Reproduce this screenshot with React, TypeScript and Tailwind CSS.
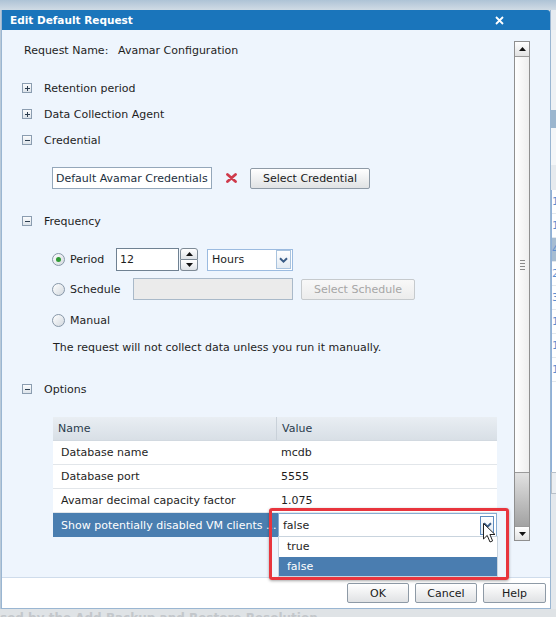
import React from "react";

function Toggle({ open }: { open?: boolean }) {
  return (
    <span className="flex h-[10px] w-[10px] shrink-0 items-center justify-center border border-[#8b9db0] bg-gradient-to-b from-[#fbfcfd] to-[#dce3ea]">
      <svg width="5" height="5" viewBox="0 0 5 5" shapeRendering="crispEdges">
        <rect x="0" y="2" width="5" height="1" fill="#2c3e50" />
        {!open && <rect x="2" y="0" width="1" height="5" fill="#2c3e50" />}
      </svg>
    </span>
  );
}

function Section({ label, open, className }: { label: string; open?: boolean; className: string }) {
  return (
    <div className={`flex h-[20px] items-center gap-[12px] pl-[20px] ${className}`}>
      <Toggle open={open} />
      <span>{label}</span>
    </div>
  );
}

function Radio({ checked }: { checked?: boolean }) {
  return (
    <span className="flex h-[13px] w-[13px] shrink-0 items-center justify-center rounded-full border border-[#8797a8] bg-gradient-to-br from-white to-[#d3d9df]">
      {checked && <span className="h-[5px] w-[5px] rounded-full bg-[#2f9a35]" />}
    </span>
  );
}

function Btn({ children, className, disabled }: { children: React.ReactNode; className: string; disabled?: boolean }) {
  return (
    <div
      className={`flex items-center justify-center rounded-[2px] border ${
        disabled
          ? "border-[#c6cacd] bg-gradient-to-b from-[#f8f8f8] to-[#ececec] text-[#a6a6a6]"
          : "border-[#8e9aa6] bg-gradient-to-b from-white to-[#e0e2e4] text-[#1a1a1a]"
      } ${className}`}
    >
      {children}
    </div>
  );
}

function Chevron() {
  return (
    <svg width="9" height="6" viewBox="0 0 9 6">
      <path d="M1 1.2 L4.5 4.6 L8 1.2" fill="none" stroke="#3a5c86" strokeWidth="2" />
    </svg>
  );
}

function Tri({ down }: { down?: boolean }) {
  return (
    <svg width="7" height="4" viewBox="0 0 7 4">
      <path d={down ? "M0 0 H7 L3.5 4 Z" : "M0 4 H7 L3.5 0 Z"} fill="#111" />
    </svg>
  );
}

const rows = [
  ["Database name", "mcdb"],
  ["Database port", "5555"],
  ["Avamar decimal capacity factor", "1.075"],
];

const bgNums = ["1", "1", "4", "2", "3", "1", "1", "1"];

export default function App() {
  return (
    <div className="relative flex h-[617px] w-[556px] flex-col overflow-hidden bg-[#dfe3e6] font-['DejaVu_Sans',sans-serif] text-[11px] leading-none text-[#1e1e1e]">
      <div className="h-[10px] shrink-0 bg-gradient-to-b from-[#aec3d6] to-[#d0dbe5]" />

      <div className="flex h-[599px] shrink-0">
        <div className="w-[1px] bg-[#b9c9d8]" />

        {/* dialog */}
        <div className="flex w-[550px] flex-col border-x border-b border-[#9ab6d2]">
          <div className="flex h-[20px] shrink-0 items-center justify-between rounded-tr-[3px] bg-[#1a75bb] pl-[8px] pr-[46px] text-[10.5px] font-bold text-white">
            <span>Edit Default Request</span>
            <svg width="9" height="9" viewBox="0 0 9 9">
              <path d="M1 1 L8 8 M8 1 L1 8" stroke="white" strokeWidth="1.8" />
            </svg>
          </div>

          <div className="flex h-[547px] shrink-0 bg-[#eef5fd]">
            <div className="flex w-[512px] flex-col">
              <div className="mt-[10px] flex h-[20px] items-center pl-[22px]">
                <span className="w-[94px]">Request Name:</span>
                <span>Avamar Configuration</span>
              </div>

              <Section label="Retention period" className="mt-[18px]" />
              <Section label="Data Collection Agent" className="mt-[6px]" />
              <Section label="Credential" open className="mt-[6px]" />

              <div className="mt-[17px] flex h-[22px] items-center pl-[50px]">
                <div className="flex h-[22px] w-[160px] items-center border border-[#94a7ba] bg-white pl-[3px] text-[#1b2f3e]">
                  Default Avamar Credentials
                </div>
                <svg className="ml-[14px]" width="11" height="10" viewBox="0 0 11 10">
                  <path d="M1.5 1.5 L9.5 8.5 M9.5 1.5 L1.5 8.5" stroke="#cf3a4b" strokeWidth="2.8" strokeLinecap="round" />
                </svg>
                <Btn className="ml-[13px] h-[21px] w-[120px]">Select Credential</Btn>
              </div>

              <Section label="Frequency" open className="mt-[22px]" />

              <div className="mt-[17px] flex h-[23px] items-center pl-[50px]">
                <Radio checked />
                <span className="ml-[5px] w-[46px]">Period</span>
                <div className="flex h-[23px] w-[63px] items-start border border-[#6f8192] bg-white pl-[3px] pt-[5px]">12</div>
                <div className="ml-[1px] flex h-[23px] w-[18px] flex-col">
                  <div className="flex flex-1 items-center justify-center rounded-t-[3px] border border-[#7d8a96] bg-gradient-to-b from-white to-[#dfe3e7]">
                    <Tri />
                  </div>
                  <div className="flex flex-1 items-center justify-center rounded-b-[3px] border border-t-0 border-[#7d8a96] bg-gradient-to-b from-white to-[#dfe3e7]">
                    <Tri down />
                  </div>
                </div>
                <div className="ml-[9px] flex h-[22px] w-[86px] items-center justify-between border border-[#9bbbe0] bg-white pl-[4px] pr-[1px]">
                  <span>Hours</span>
                  <span className="flex h-[19px] w-[15px] items-center justify-center border border-[#a9c3de] bg-gradient-to-b from-white to-[#e3ebf3]">
                    <Chevron />
                  </span>
                </div>
              </div>

              <div className="mt-[7px] flex h-[22px] items-center pl-[50px]">
                <Radio />
                <span className="ml-[5px] w-[63px]">Schedule</span>
                <div className="h-[22px] w-[160px] border border-[#a9b9c9] bg-[#ebebeb]" />
                <Btn disabled className="ml-[8px] h-[21px] w-[114px]">Select Schedule</Btn>
              </div>

              <div className="mt-[10px] flex h-[20px] items-center pl-[50px]">
                <Radio />
                <span className="ml-[5px]">Manual</span>
              </div>

              <div className="mt-[8px] flex h-[18px] items-center pl-[51px]">
                The request will not collect data unless you run it manually.
              </div>

              <Section label="Options" open className="mt-[23px]" />

              <div className="ml-[51px] mt-[18px] w-[444px]">
                <div className="flex h-[24px] border-b border-[#d2d9e0] bg-gradient-to-b from-[#e9eef3] to-[#d8dfe6] text-[#2b3c4d]">
                  <div className="flex w-[224px] items-center border-r border-[#c9d1d9] pl-[5px]">Name</div>
                  <div className="flex items-center pl-[5px]">Value</div>
                </div>
                {rows.map(([n, v]) => (
                  <div key={n} className="flex h-[24px] border-b border-[#e2e6ea] bg-white">
                    <div className="flex w-[224px] items-center pl-[8px]">{n}</div>
                    <div className="flex items-center pl-[4px]">{v}</div>
                  </div>
                ))}
                <div className="flex h-[24px]">
                  <div className="flex w-[225px] items-center bg-[#4a7eb0] pl-[8px] text-white">
                    Show potentially disabled VM clients ...
                  </div>
                  <div className="relative flex flex-1 items-center justify-between border border-[#86acd2] bg-white pl-[4px] pr-[2px]">
                    <span>false</span>
                    <span className="flex h-[19px] w-[14px] items-center justify-center border border-[#5d8cc0] bg-gradient-to-b from-white to-[#e1eaf3]">
                      <Chevron />
                    </span>
                    <div className="absolute -left-[1px] top-full flex h-[41px] w-[220px] flex-col border border-[#c9d4de] bg-white">
                      <div className="flex h-[20px] items-center pl-[8px]">true</div>
                      <div className="flex h-[20px] items-center bg-[#4a7db0] pl-[8px] text-white">false</div>
                    </div>
                  </div>
                </div>
              </div>
            </div>

            {/* scrollbar */}
            <div className="mt-[11px] flex h-[500px] w-[16px] flex-col border border-[#8f8f8f] bg-[#f2f2f2]">
              <div className="flex h-[15px] shrink-0 items-center justify-center border-b border-[#9a9a9a] bg-gradient-to-b from-white to-[#e2e2e2]">
                <Tri />
              </div>
              <div className="flex h-[416px] shrink-0 items-center justify-center border-b border-[#9a9a9a] bg-gradient-to-r from-white to-[#eeeeee]">
                <div className="flex w-[5px] flex-col gap-[2px]">
                  <div className="h-[1px] bg-[#8a8a8a]" />
                  <div className="h-[1px] bg-[#8a8a8a]" />
                  <div className="h-[1px] bg-[#8a8a8a]" />
                  <div className="h-[1px] bg-[#8a8a8a]" />
                </div>
              </div>
              <div className="flex-1 bg-gradient-to-b from-[#e2e2e2] to-[#a2a2a2]" />
              <div className="flex h-[14px] shrink-0 items-center justify-center border-t border-[#9a9a9a] bg-gradient-to-b from-white to-[#e2e2e2]">
                <Tri down />
              </div>
            </div>
          </div>

          <div className="flex h-[31px] shrink-0 justify-end gap-[6px] border-t border-[#cfdceb] bg-white pr-[4px] pt-[5px]">
            <Btn className="h-[20px] w-[62px]">OK</Btn>
            <Btn className="h-[20px] w-[62px]">Cancel</Btn>
            <Btn className="h-[20px] w-[63px]">Help</Btn>
          </div>
        </div>

        {/* background app, right edge */}
        <div className="flex w-[5px] flex-col overflow-hidden text-[11px] text-[#5d8fd0]">
          <div className="h-[20px] bg-[#e6ebf0]" />
          <div className="h-[80px] bg-[#eef1f4]" />
          <div className="h-[18px] bg-[#9cb6ce]" />
          <div className="h-[37px] bg-[#f4f6f8]" />
          <div className="h-[25px] bg-[#e6eaee]" />
          <div className="flex flex-col border-l border-[#8fb0d8] bg-white">
            {bgNums.map((n, i) => (
              <div key={i} className={`flex h-[24px] items-center border-b border-[#e4e8ec] ${i === 2 ? "bg-[#a7bdd2]" : ""}`}>
                {n}
              </div>
            ))}
          </div>
          <div className="h-[90px] border-l border-[#8fb0d8] bg-white" />
          <div className="h-[22px] border-y border-l border-[#b8c0c8] bg-[#eceff2]" />
          <div className="flex-1 bg-[#e4e8ec]" />
        </div>
      </div>

      <div className="h-[8px] overflow-hidden whitespace-nowrap pt-[3px] text-[12px] font-bold text-[#c3c7cb]">
        sed by the Add Backup and Restore Resolution
      </div>

      {/* annotation */}
      <div className="pointer-events-none absolute left-[269px] top-[508px] h-[72px] w-[240px] rounded-[3px] border-[3px] border-[#e8353d] shadow-[0_1px_3px_rgba(0,0,0,0.35)]" />
      <svg className="absolute left-[483px] top-[523px]" width="14" height="21" viewBox="0 0 14 21">
        <path d="M0.5 0.5 L0.5 16 L4.2 12.4 L7 19 L9.6 17.9 L6.9 11.5 L12 11.5 Z" fill="white" stroke="#222" strokeWidth="1" />
      </svg>
    </div>
  );
}
